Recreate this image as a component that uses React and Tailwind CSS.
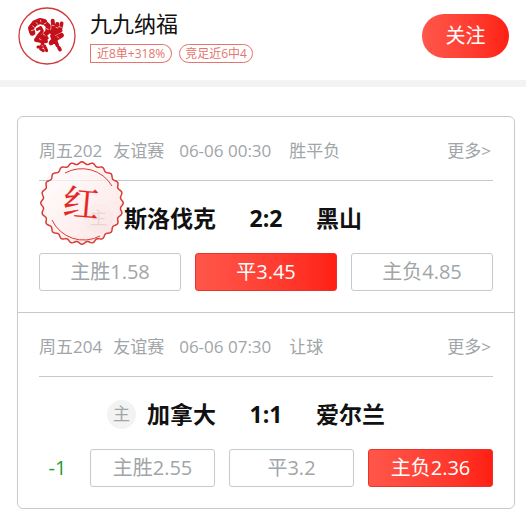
const FONT = "font-['Open_Sans','Noto_Sans_CJK_SC',sans-serif]";

const matches = [
  {
    id: '周五202', league: '友谊赛', time: '06-06 00:30', play: '胜平负',
    home: '斯洛伐克', score: '2:2', away: '黑山', won: true,
    odds: [['主胜1.58', false], ['平3.45', true], ['主负4.85', false]],
  },
  {
    id: '周五204', league: '友谊赛', time: '06-06 07:30', play: '让球',
    home: '加拿大', score: '1:1', away: '爱尔兰', handicap: '-1',
    odds: [['主胜2.55', false], ['平3.2', false], ['主负2.36', true]],
  },
];

function Avatar() {
  return (
    <svg viewBox="0 0 58 58" className="size-[58px] shrink-0" role="img" aria-label="头像">
      <circle cx="29" cy="29" r="28" fill="#fff" stroke="#cf3b3b" strokeWidth="1.3" />
      <g transform="translate(8 9) scale(0.3333)">
        <g fill="none" stroke="#c4101a" strokeLinecap="round" strokeLinejoin="round">
          <path d="M19 50L15 36L26 22L42 15L54 18" strokeWidth="18" />
          <path d="M54 18L67 30L65 48L50 62L38 70" strokeWidth="15" />
          <path d="M34 40L44 35L49 45L36 60L30 70" strokeWidth="9" />
          <path d="M30 72L45 74L62 66M44 76L60 76" strokeWidth="12" />
          <path d="M50 82L46 92M36 93L56 90M44 99L52 104M58 95L62 104" strokeWidth="9" />
          <path d="M80 14L82 34L80 50M94 24L88 42" strokeWidth="12" />
          <path d="M107 22L104 36L92 46M74 48L88 52L104 44" strokeWidth="11" />
          <path d="M106 58L92 66L76 80M80 60L86 76" strokeWidth="15" />
          <path d="M90 78L94 88M99 96L102 101M74 82L77 76" strokeWidth="11" />
        </g>
        <g stroke="#fff" strokeWidth="2" fill="none" strokeLinecap="round">
          <path d="M20 30l5 4M31 20l4 5M43 12l2 6M16 44l7-2M54 24l6-3M61 38l6 2M52 54l5 4M40 68l5 3M46 28l6 4M78 28l6 1M90 34l5 2M100 32l6 2M94 62l4 4M48 88l3 3M25 40l4 3" />
        </g>
      </g>
    </svg>
  );
}

function scallop() {
  const points = [];
  for (let i = 0; i <= 288; i += 1) {
    const a = (i / 288) * Math.PI * 2;
    const r = 40 + 1.2 * Math.cos(a * 24);
    points.push(`${(42 + r * Math.sin(a)).toFixed(2)} ${(42 - r * Math.cos(a)).toFixed(2)}`);
  }
  return `M${points.join('L')}Z`;
}

function Seal() {
  return (
    <svg viewBox="0 0 84 84" className="absolute top-[44px] left-[22px] size-[84px]" role="img" aria-label="红">
      <defs>
        <linearGradient id="seal" x1="0" y1="0" x2="1" y2="1">
          <stop offset="0" stopColor="#fff" stopOpacity="0.75" />
          <stop offset="1" stopColor="#fddcdc" stopOpacity="0.75" />
        </linearGradient>
      </defs>
      <path d={scallop()} fill="url(#seal)" stroke="#d83a34" strokeWidth="1.5" />
      <path d="M25 12A35 35 0 0 1 72 25M12 59A35 35 0 0 0 60 75" fill="none" stroke="#d83a34" strokeWidth="1" />
      <text x="41" y="55" textAnchor="middle" fontSize="36" fill="#e6241c" stroke="#e6241c" strokeWidth="0.3" transform="rotate(5 41 42)" className="font-['Noto_Serif_CJK_SC','Noto_Sans_CJK_SC',serif]">红</text>
    </svg>
  );
}

function Match({ match }) {
  return (
    <section className="relative border-b border-[#c5cacc] px-[21px] pb-[21px] last:border-b-0">
      <header className="flex h-16 items-center border-b border-[#c5cacc] pt-1 text-[17px] leading-6 text-[#9fa5a8]">
        <span className="mr-[11px]">{match.id}</span>
        <span className="mr-[15px]">{match.league}</span>
        <time className="mr-[18px]">{match.time}</time>
        <span>{match.play}</span>
        <a href="#more" className="mr-0.5 ml-auto">更多&gt;</a>
      </header>
      <div className="grid h-[72px] grid-cols-[1fr_100px_1fr] items-center pt-0.5 text-[23px] leading-8 font-bold text-[#111]">
        <div className="flex items-center justify-end gap-[11px]">
          <span className="flex size-[29px] items-center justify-center rounded-full bg-[#f3f3f3] text-[17px] leading-6 font-normal text-[#9fa5a8]">主</span>
          <span>{match.home}</span>
        </div>
        <span className="text-center">{match.score}</span>
        <span>{match.away}</span>
      </div>
      <div className="flex items-center gap-[14px] text-[20px] leading-7">
        {match.handicap && <span className="w-[37px] text-center text-[#1f9d2c]">{match.handicap}</span>}
        <div className="grid flex-1 grid-cols-3 gap-[14px]">
          {match.odds.map(([label, picked]) => (
            <button
              key={label}
              type="button"
              className={picked
                ? 'h-[38px] rounded-[3px] border border-[#e8342b] bg-linear-to-r from-[#ff564a] to-[#ff1e12] text-white'
                : 'h-[38px] rounded-[3px] border border-[#c5cacc] bg-white text-[#9fa5a8]'}
            >
              {label}
            </button>
          ))}
        </div>
      </div>
      {match.won && <Seal />}
    </section>
  );
}

export default function App() {
  return (
    <main className={`${FONT} bg-white pb-[7px]`}>
      <header className="flex h-20 items-start pt-[7px] pr-[17px] pl-[18px]">
        <Avatar />
        <div className="ml-[14px]">
          <h1 className="text-[22px] leading-8 text-[#111]">九九纳福</h1>
          <div className="mt-[5px] flex gap-[7px] text-[12px] leading-[17px] text-[#e5756e]">
            <span className="rounded-r-full rounded-bl-[6px] border border-[#e5756e] px-1.5">近8单+318%</span>
            <span className="rounded-full border border-[#e5756e] px-[5px]">竞足近6中4</span>
          </div>
        </div>
        <button type="button" className="mt-[7px] ml-auto h-11 w-[87px] rounded-full bg-linear-to-r from-[#ff564a] to-[#ff1e12] text-[20px] leading-7 text-white">关注</button>
      </header>
      <div className="h-[7px] bg-[#f3f3f3]" />
      <div className="mt-[29px] mr-[11px] ml-[17px] rounded-[6px] border border-[#c5cacc]">
        {matches.map((match) => <Match key={match.id} match={match} />)}
      </div>
    </main>
  );
}
